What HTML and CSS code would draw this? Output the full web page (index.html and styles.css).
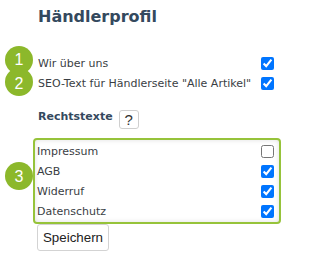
FILE: index.html
```html
<!DOCTYPE html>
<html lang="de">
<head>
<meta charset="utf-8">
<title>Händlerprofil</title>
<link rel="stylesheet" href="styles.css">
</head>
<body>
<div class="page">
  <h1 class="title">Händlerprofil</h1>
  <div class="top-rows">
    <label class="row"><span class="label">Wir über uns</span><input type="checkbox" checked></label>
    <label class="row"><span class="label">SEO-Text für Händlerseite "Alle Artikel"</span><input type="checkbox" checked></label>
  </div>
  <div class="legal-head">
    <span class="legal-title">Rechtstexte</span>
    <button class="help" type="button">?</button>
  </div>
  <div class="legal-box">
    <label class="row"><span class="label">Impressum</span><input type="checkbox"></label>
    <label class="row"><span class="label">AGB</span><input type="checkbox" checked></label>
    <label class="row"><span class="label">Widerruf</span><input type="checkbox" checked></label>
    <label class="row"><span class="label">Datenschutz</span><input type="checkbox" checked></label>
  </div>
  <button class="save" type="button">Speichern</button>

  <span class="badge badge-1">1</span>
  <span class="badge badge-2">2</span>
  <span class="badge badge-3">3</span>
</div>
</body>
</html>
```

FILE: styles.css
```css
html, body {
  margin: 0;
  padding: 0;
  background: #ffffff;
}

body {
  font-family: "DejaVu Sans", Verdana, sans-serif;
  font-size: 11px;
  color: #3a3e44;
}

.page {
  position: relative;
  width: 248px;
  padding: 7px 0 0 33px;
}

.title {
  margin: 0;
  padding-left: 5px;
  font-size: 16px;
  line-height: 20px;
  font-weight: bold;
  color: #34495e;
}

.top-rows {
  margin-top: 26px;
  padding: 0 7px 0 5px;
}

.row {
  display: flex;
  justify-content: space-between;
  align-items: center;
  height: 20px;
}

.row input {
  width: 13px;
  height: 13px;
  margin: 0;
  flex: none;
}

.label {
  white-space: nowrap;
}

.legal-head {
  display: flex;
  align-items: flex-start;
  margin-top: 17px;
  padding-left: 5px;
  height: 19px;
}

.legal-title {
  font-weight: bold;
  line-height: 14px;
  color: #34495e;
}

.help {
  margin: 0 0 0 6px;
  padding: 0;
  width: 20px;
  height: 19px;
  border: 1px solid #cfcfcf;
  border-radius: 3px;
  background: #ffffff;
  font-family: "Liberation Sans", Arial, sans-serif;
  font-size: 15px;
  line-height: 17px;
  color: #333333;
}

.legal-box {
  margin-top: 9px;
  padding: 1px 5px 1px 2px;
  border: 2px solid #96c33a;
  border-radius: 4px;
  box-shadow: inset 0 0 5px rgba(0, 0, 0, 0.13);
}

.save {
  display: block;
  margin: 0 0 0 4px;
  padding: 0;
  width: 72px;
  height: 27px;
  border: 1px solid #d3d3d3;
  border-radius: 3px;
  background: #ffffff;
  font-family: "Liberation Sans", Arial, sans-serif;
  font-size: 13.333px;
  color: #222222;
}

.badge {
  position: absolute;
  left: 5px;
  width: 28px;
  height: 28px;
  border-radius: 50%;
  background: #8cb82b;
  color: #ffffff;
  font-family: "Liberation Sans", Arial, sans-serif;
  font-size: 16px;
  line-height: 28px;
  text-align: center;
}

.badge-1 {
  top: 46px;
}

.badge-2 {
  top: 68px;
  line-height: 32px;
}

.badge-3 {
  top: 162px;
  line-height: 30px;
}
```
